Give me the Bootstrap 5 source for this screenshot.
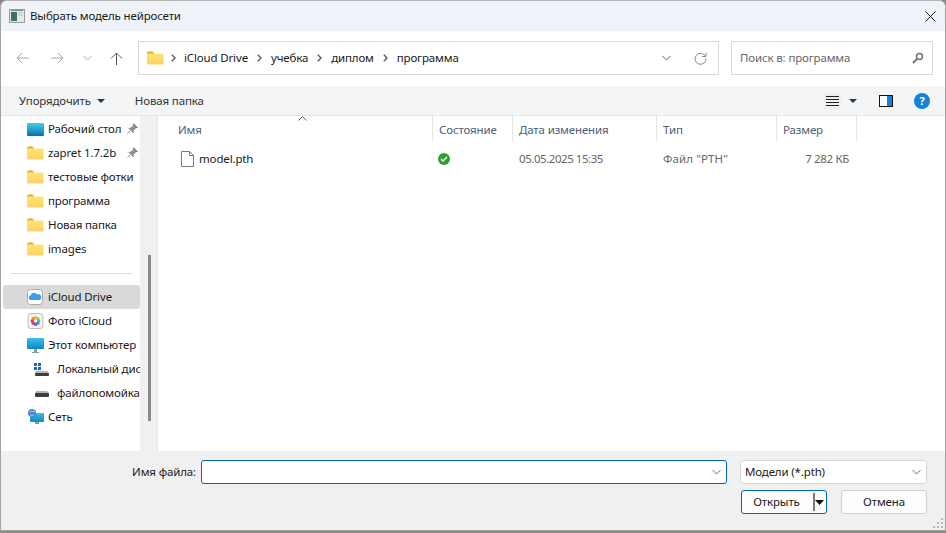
<!DOCTYPE html>
<html lang="ru">
<head>
    <meta charset="UTF-8">
    <title>Выбрать модель нейросети</title>
    <link href="https://cdn.jsdelivr.net/npm/bootstrap@5.3.0/dist/css/bootstrap.min.css" rel="stylesheet">
    <style>
        html, body { height: 100%; }
        body { background: #8a8a86; font-family: "Noto Sans", "Open Sans", sans-serif; font-size: 11.5px; letter-spacing: -.15px; color: #1a1a1a; overflow: hidden; }
        svg { display: block; flex-shrink: 0; }
        .dlg { width: 946px; height: 531px; background: #fff; border: 1px solid #a3a3a3; border-top-color: #b5b5b5; border-radius: 7px 7px 0 0; overflow: hidden; }
        .dlg-title { height: 30px; background: #eff3f9; padding-left: 8px; gap: 5px; }
        .dlg-x { margin-left: auto; width: 30px; }
        .addr-row { height: 55px; padding: 0 0 1px 15px; }
        .addr-box { width: 581px; height: 34px; border: 1px solid #d9d9d9; padding-left: 8px; }
        .crumb { margin: 0 9px; }
        .search-box { width: 202px; height: 34px; margin-left: 12px; border: 1px solid #d9d9d9; padding: 0 8px 0 8px; color: #666; }
        .tool-row { height: 30px; background: #f4f5f7; padding-left: 18px; color: #333; border-bottom: 1px solid #e5e5e5; }
        .list-ic { padding: 3px 2px; background: #eeeff1; margin-left: auto; }
        .mid { height: 335px; }
        .side { width: 139px; padding-top: 1px; overflow: hidden; flex-shrink: 0; }
        .side-it { height: 24px; padding-left: 26px; gap: 4px; white-space: nowrap; overflow: hidden; position: relative; }
        .side-it.sub { padding-left: 33px; }
        .side-it.act { background: #d9d9d9; border-radius: 3px; margin-left: 2px; padding-left: 24px; gap: 5px; }
        .pin { position: absolute; right: 2px; top: 6px; }
        .side-sep { height: 1px; background: #d9d9d9; margin: 12px 8px 11px 10px; }
        .side-bar { width: 18px; background: #f0f0f0; border-right: 1px solid #e6e6e6; position: relative; flex-shrink: 0; }
        .side-thumb { position: absolute; left: 8px; top: 139px; width: 3px; height: 166px; background: #8b8b8b; }
        .files { flex: 1; min-width: 0; }
        .col-head { height: 26px; position: relative; color: #4c607a; padding-left: 14px; }
        .hcell { height: 26px; border-right: 1px solid #e5e5e5; padding: 2px 0 0 6px; flex-shrink: 0; }
        .sort-mark { position: absolute; left: 140px; top: 0; }
        .f-row { height: 24px; margin-top: 5px; color: #666; }
        .f-name { width: 275px; padding-left: 23px; gap: 5px; color: #1a1a1a; }
        .f-state { width: 80px; padding-left: 5px; }
        .f-date { width: 144px; padding-left: 6px; letter-spacing: -.45px; }
        .f-type { width: 120px; padding-left: 6px; letter-spacing: .1px; }
        .f-size { width: 72px; text-align: right; letter-spacing: -.35px; }
        .foot { height: 79px; background: #f0f0f0; position: relative; }
        .lbl-name { width: 200px; text-align: right; padding-right: 5px; }
        .fn-input { width: 526px; height: 24px; background: #fff; border: 1px solid #0067c0; border-radius: 3px; padding-right: 5px; }
        .type-sel { width: 187px; height: 24px; margin-left: 13px; background: #fff; border: 1px solid #d6d6d6; border-radius: 3px; padding: 0 5px 0 4px; }
        .foot-top { padding-top: 9px; }
        .foot-btns { padding: 6px 18px 0 0; gap: 14px; }
        .dlg-btn { height: 24px; width: 86px; background: #fdfdfd; border: 1px solid #d0d0d0; border-radius: 3px; padding: 0; color: #1a1a1a; letter-spacing: inherit; }
        .dlg-btn.def { border-color: #0067c0; position: relative; padding-right: 15px; }
        .btn-div { position: absolute; left: 71px; top: 2px; width: 2px; height: 18px; background: #7a7a7a; }
        .btn-arrow { position: absolute; right: 1px; top: 9px; }
        .grip { position: absolute; right: 1px; bottom: 1px; }
    </style>
</head>
<body>
<svg width="0" height="0" style="position:absolute">
    <defs>
        <linearGradient id="fold" x1="0" y1="0" x2="0" y2="1"><stop offset="0" stop-color="#ffe27a"/><stop offset="1" stop-color="#fbd25e"/></linearGradient>
        <linearGradient id="dsk" x1="0" y1="0" x2="0" y2="1"><stop offset="0" stop-color="#3dd3e8"/><stop offset="1" stop-color="#0a6fb5"/></linearGradient>
        <linearGradient id="pc" x1="0" y1="0" x2="0" y2="1"><stop offset="0" stop-color="#35c3e5"/><stop offset="1" stop-color="#1187c4"/></linearGradient>
        <symbol id="ic-folder" viewBox="0 0 17 14"><path d="M0 3V2q0-1.500 1.500-1.500h4l2 2.500z" fill="#f3ae0b"/><rect y="2.500" width="16.500" height="11" rx="1" fill="url(#fold)"/></symbol>
        <symbol id="ic-pin" viewBox="0 0 11 11"><path d="M6.500.5l4 4-2 .5-2 2.500-.5 2-4-4 2-.5 2.500-2zM3 8l-2.500 2.500" fill="#8f8f8f" stroke="#8f8f8f"/></symbol>
        <symbol id="ic-chev" viewBox="0 0 9 6"><path d="M.5 1l4 4 4-4" stroke="#666" fill="none"/></symbol>
        <symbol id="ic-crumb" viewBox="0 0 5 8"><path d="M.8.800L4 4 .8 7.200" stroke="#555" stroke-width="1.300" fill="none"/></symbol>
    </defs>
</svg>
<div class="dlg d-flex flex-column">
    <!-- заголовок -->
    <div class="dlg-title d-flex align-items-center">
        <svg width="16" height="14" viewBox="0 0 16 14"><rect x=".5" y=".5" width="15" height="13" fill="#e8e8e8" stroke="#9a9a9a"/><rect x="2" y="3" width="6" height="9" fill="#3f6f6a"/><rect x="9" y="3" width="5" height="4" fill="#cfd8d8"/><rect x="2" y="1" width="12" height="1" fill="#7c8d8d"/></svg>
        <span>Выбрать модель нейросети</span>
        <div class="dlg-x d-flex justify-content-center">
            <svg width="11" height="11" viewBox="0 0 11 11"><path d="M.5.5l10 10M10.500.5l-10 10" stroke="#1a1a1a" fill="none"/></svg>
        </div>
    </div>

    <!-- адресная строка -->
    <div class="addr-row d-flex align-items-center">
        <div style="width:35px"><svg width="13" height="12" viewBox="0 0 13 12"><path d="M6 1L1 6l5 5M1 6h12" stroke="#a8a8a8" fill="none"/></svg></div>
        <div style="width:32px"><svg width="13" height="12" viewBox="0 0 13 12"><path d="M7 1l5 5-5 5M12 6H0" stroke="#a8a8a8" fill="none"/></svg></div>
        <div style="width:27px"><svg width="9" height="6" viewBox="0 0 9 6"><path d="M.5 1l4 4 4-4" stroke="#a8a8a8" fill="none"/></svg></div>
        <div style="width:28px"><svg width="13" height="13" viewBox="0 0 13 13"><path d="M1 6.500l5.500-5.500 5.500 5.500M6.500 1v12" stroke="#555" fill="none"/></svg></div>
        <div class="addr-box d-flex align-items-center">
            <svg width="17" height="14"><use href="#ic-folder"/></svg>
            <svg class="crumb" style="margin:0 8px 0 7px" width="5" height="8"><use href="#ic-crumb"/></svg><span>iCloud Drive</span>
            <svg class="crumb" width="5" height="8"><use href="#ic-crumb"/></svg><span>учебка</span>
            <svg class="crumb" width="5" height="8"><use href="#ic-crumb"/></svg><span>диплом</span>
            <svg class="crumb" width="5" height="8"><use href="#ic-crumb"/></svg><span>программа</span>
            <svg class="ms-auto" width="9" height="6"><use href="#ic-chev"/></svg>
            <svg style="margin:0 11px 0 23px" width="13" height="13" viewBox="0 0 13 13"><path d="M11.500 4.500a5.500 5.500 0 1 0 .5 2M12 .5v4H8" stroke="#8a8a8a" fill="none"/></svg>
        </div>
        <div class="search-box d-flex align-items-center justify-content-between">
            <span>Поиск в: программа</span>
            <svg width="12" height="12" viewBox="0 0 12 12"><circle cx="7.500" cy="4.500" r="3" stroke="#707070" stroke-width="1.500" fill="none"/><path d="M5 7l-4 4" stroke="#707070" stroke-width="2"/></svg>
        </div>
    </div>

    <!-- панель -->
    <div class="tool-row d-flex align-items-center">
        <span>Упорядочить</span>
        <svg style="margin-left:6px" width="8" height="4" viewBox="0 0 8 4"><path d="M0 0h8L4 4z" fill="#1f3a5f"/></svg>
        <span style="margin-left:30px">Новая папка</span>
        <div class="list-ic"><svg width="13" height="10" viewBox="0 0 13 10"><path d="M0 .5h13M0 3.500h13M0 6.500h13M0 9.500h13" stroke="#222"/></svg></div>
        <svg style="margin-left:8px" width="8" height="4" viewBox="0 0 8 4"><path d="M0 0h8L4 4z" fill="#1f3a5f"/></svg>
        <svg style="margin-left:22px" width="14" height="12" viewBox="0 0 14 12"><rect x=".5" y=".5" width="13" height="11" fill="#fff" stroke="#111"/><rect x="8" y="1" width="5" height="10" fill="#1683d8"/></svg>
        <svg style="margin:0 15px 0 21px" width="16" height="16" viewBox="0 0 16 16"><circle cx="8" cy="8" r="8" fill="#1683d8"/><text x="8" y="12" font-size="11" font-weight="700" text-anchor="middle" fill="#fff">?</text></svg>
    </div>

    <!-- центральная часть -->
    <div class="mid d-flex">
        <div class="side">
            <div class="side-it d-flex align-items-center">
                <svg width="17" height="13" viewBox="0 0 17 13"><rect width="17" height="13" rx="1" fill="url(#dsk)"/></svg>
                <span>Рабочий стол</span>
                <svg class="pin" width="11" height="11"><use href="#ic-pin"/></svg>
            </div>
            <div class="side-it d-flex align-items-center">
                <svg width="17" height="14"><use href="#ic-folder"/></svg>
                <span>zapret 1.7.2b</span>
                <svg class="pin" width="11" height="11"><use href="#ic-pin"/></svg>
            </div>
            <div class="side-it d-flex align-items-center">
                <svg width="17" height="14"><use href="#ic-folder"/></svg>
                <span>тестовые фотки</span>
            </div>
            <div class="side-it d-flex align-items-center">
                <svg width="17" height="14"><use href="#ic-folder"/></svg>
                <span>программа</span>
            </div>
            <div class="side-it d-flex align-items-center">
                <svg width="17" height="14"><use href="#ic-folder"/></svg>
                <span>Новая папка</span>
            </div>
            <div class="side-it d-flex align-items-center">
                <svg width="17" height="14"><use href="#ic-folder"/></svg>
                <span>images</span>
            </div>
            <div class="side-sep"></div>
            <div class="side-it act d-flex align-items-center">
                <svg width="16" height="16" viewBox="0 0 16 16"><rect x=".5" y=".5" width="15" height="15" rx="3" fill="#fff" stroke="#aaa"/><path d="M3.500 11a2.300 2.300 0 0 1 0-4.500 3.500 3.500 0 0 1 6.500-1 3 3 0 0 1 2.500 5.500z" fill="#3d9be9"/></svg>
                <span>iCloud Drive</span>
            </div>
            <div class="side-it d-flex align-items-center">
                <svg width="17" height="16" viewBox="0 0 16 16"><rect x=".5" y=".5" width="15" height="15" rx="3" fill="#f4f4f4" stroke="#bbb"/><circle cx="8" cy="4.800" r="1.700" fill="#f5b82e"/><circle cx="10.300" cy="5.700" r="1.700" fill="#a8c83a"/><circle cx="11.200" cy="8" r="1.700" fill="#4db6ac"/><circle cx="10.300" cy="10.300" r="1.700" fill="#4a90d9"/><circle cx="8" cy="11.200" r="1.700" fill="#7e57c2"/><circle cx="5.700" cy="10.300" r="1.700" fill="#c2479b"/><circle cx="4.800" cy="8" r="1.700" fill="#e53935"/><circle cx="5.700" cy="5.700" r="1.700" fill="#f0802e"/></svg>
                <span>Фото iCloud</span>
            </div>
            <div class="side-it d-flex align-items-center">
                <svg width="17" height="15" viewBox="0 0 17 15"><rect width="17" height="11" rx="1" fill="url(#pc)"/><rect x="7" y="11" width="3" height="3" fill="#8a9aa5"/><rect x="5" y="14" width="7" height="1" fill="#8a9aa5"/></svg>
                <span>Этот компьютер</span>
            </div>
            <div class="side-it sub d-flex align-items-center">
                <svg width="15" height="13" viewBox="0 0 15 13"><rect width="3" height="3" fill="#1668c4"/><rect x="4" width="3" height="3" fill="#1668c4"/><rect y="4" width="3" height="3" fill="#1668c4"/><rect x="4" y="4" width="3" height="3" fill="#1668c4"/><path d="M2 8h11l2 2H1z" fill="#b4b4b4"/><rect x="1" y="10" width="14" height="3" rx="1" fill="#3d3d3d"/></svg>
                <span style="margin-left:4px">Локальный диск</span>
            </div>
            <div class="side-it sub d-flex align-items-center">
                <svg style="margin-top:2px" width="15" height="6" viewBox="0 0 15 6"><path d="M2 0h11l2 2H1z" fill="#b4b4b4"/><rect x="1" y="2" width="14" height="4" rx="1" fill="#3d3d3d"/></svg>
                <span style="margin-left:4px">файлопомойка</span>
            </div>
            <div class="side-it d-flex align-items-center">
                <svg width="17" height="16" viewBox="0 0 17 16"><rect x="3" y="4" width="14" height="9" rx="1" fill="url(#pc)"/><circle cx="5" cy="4" r="4" fill="#4d86c4"/><path d="M2 3q3-2 6 0M3 6q2 1 4 0" stroke="#cde2f5" fill="none" stroke-width=".7"/><rect x="8" y="13" width="4" height="2" fill="#8a9aa5"/></svg>
                <span>Сеть</span>
            </div>
        </div>
        <div class="side-bar"><div class="side-thumb"></div></div>

        <div class="files">
            <div class="col-head d-flex">
                <svg class="sort-mark" width="9" height="5" viewBox="0 0 9 5"><path d="M.5 4.500l4-4 4 4" stroke="#666" fill="none"/></svg>
                <div class="hcell d-flex align-items-center" style="width:261px">Имя</div>
                <div class="hcell d-flex align-items-center" style="width:80px">Состояние</div>
                <div class="hcell d-flex align-items-center" style="width:144px">Дата изменения</div>
                <div class="hcell d-flex align-items-center" style="width:120px">Тип</div>
                <div class="hcell d-flex align-items-center" style="width:80px">Размер</div>
            </div>
            <div class="f-row d-flex align-items-center">
                <div class="f-name d-flex align-items-center">
                    <svg width="13" height="16" viewBox="0 0 13 16"><path d="M.5.500h8l4 4v11H.5zM8.500.5v4h4" fill="#fff" stroke="#7a7a7a"/></svg>
                    <span>model.pth</span>
                </div>
                <div class="f-state">
                    <svg width="12" height="12" viewBox="0 0 12 12"><circle cx="6" cy="6" r="6" fill="#2f9e35"/><path d="M3 6l2 2 4-4" stroke="#fff" stroke-width="1.300" fill="none"/></svg>
                </div>
                <div class="f-date">05.05.2025 15:35</div>
                <div class="f-type">Файл "PTH"</div>
                <div class="f-size">7 282 КБ</div>
            </div>
        </div>
    </div>

    <!-- низ -->
    <div class="foot">
        <div class="foot-top d-flex align-items-center">
            <div class="lbl-name">Имя файла:</div>
            <div class="fn-input d-flex align-items-center justify-content-end">
                <svg width="9" height="6"><use href="#ic-chev"/></svg>
            </div>
            <div class="type-sel d-flex align-items-center justify-content-between">
                <span>Модели (*.pth)</span>
                <svg width="9" height="6"><use href="#ic-chev"/></svg>
            </div>
        </div>
        <div class="foot-btns d-flex justify-content-end">
            <button type="button" class="dlg-btn def">Открыть<span class="btn-div"></span>
                <svg class="btn-arrow" width="11" height="5" viewBox="0 0 11 5"><path d="M1 0h9L5.500 5z" fill="#111"/></svg>
            </button>
            <button type="button" class="dlg-btn">Отмена</button>
        </div>
        <svg class="grip" width="11" height="11" viewBox="0 0 11 11"><g fill="#b8b8b8"><rect x="8" width="2" height="2"/><rect x="4" y="4" width="2" height="2"/><rect x="8" y="4" width="2" height="2"/><rect y="8" width="2" height="2"/><rect x="4" y="8" width="2" height="2"/><rect x="8" y="8" width="2" height="2"/></g></svg>
    </div>
</div>
<script src="https://cdn.jsdelivr.net/npm/bootstrap@5.3.0/dist/js/bootstrap.bundle.min.js"></script>
</body>
</html>
